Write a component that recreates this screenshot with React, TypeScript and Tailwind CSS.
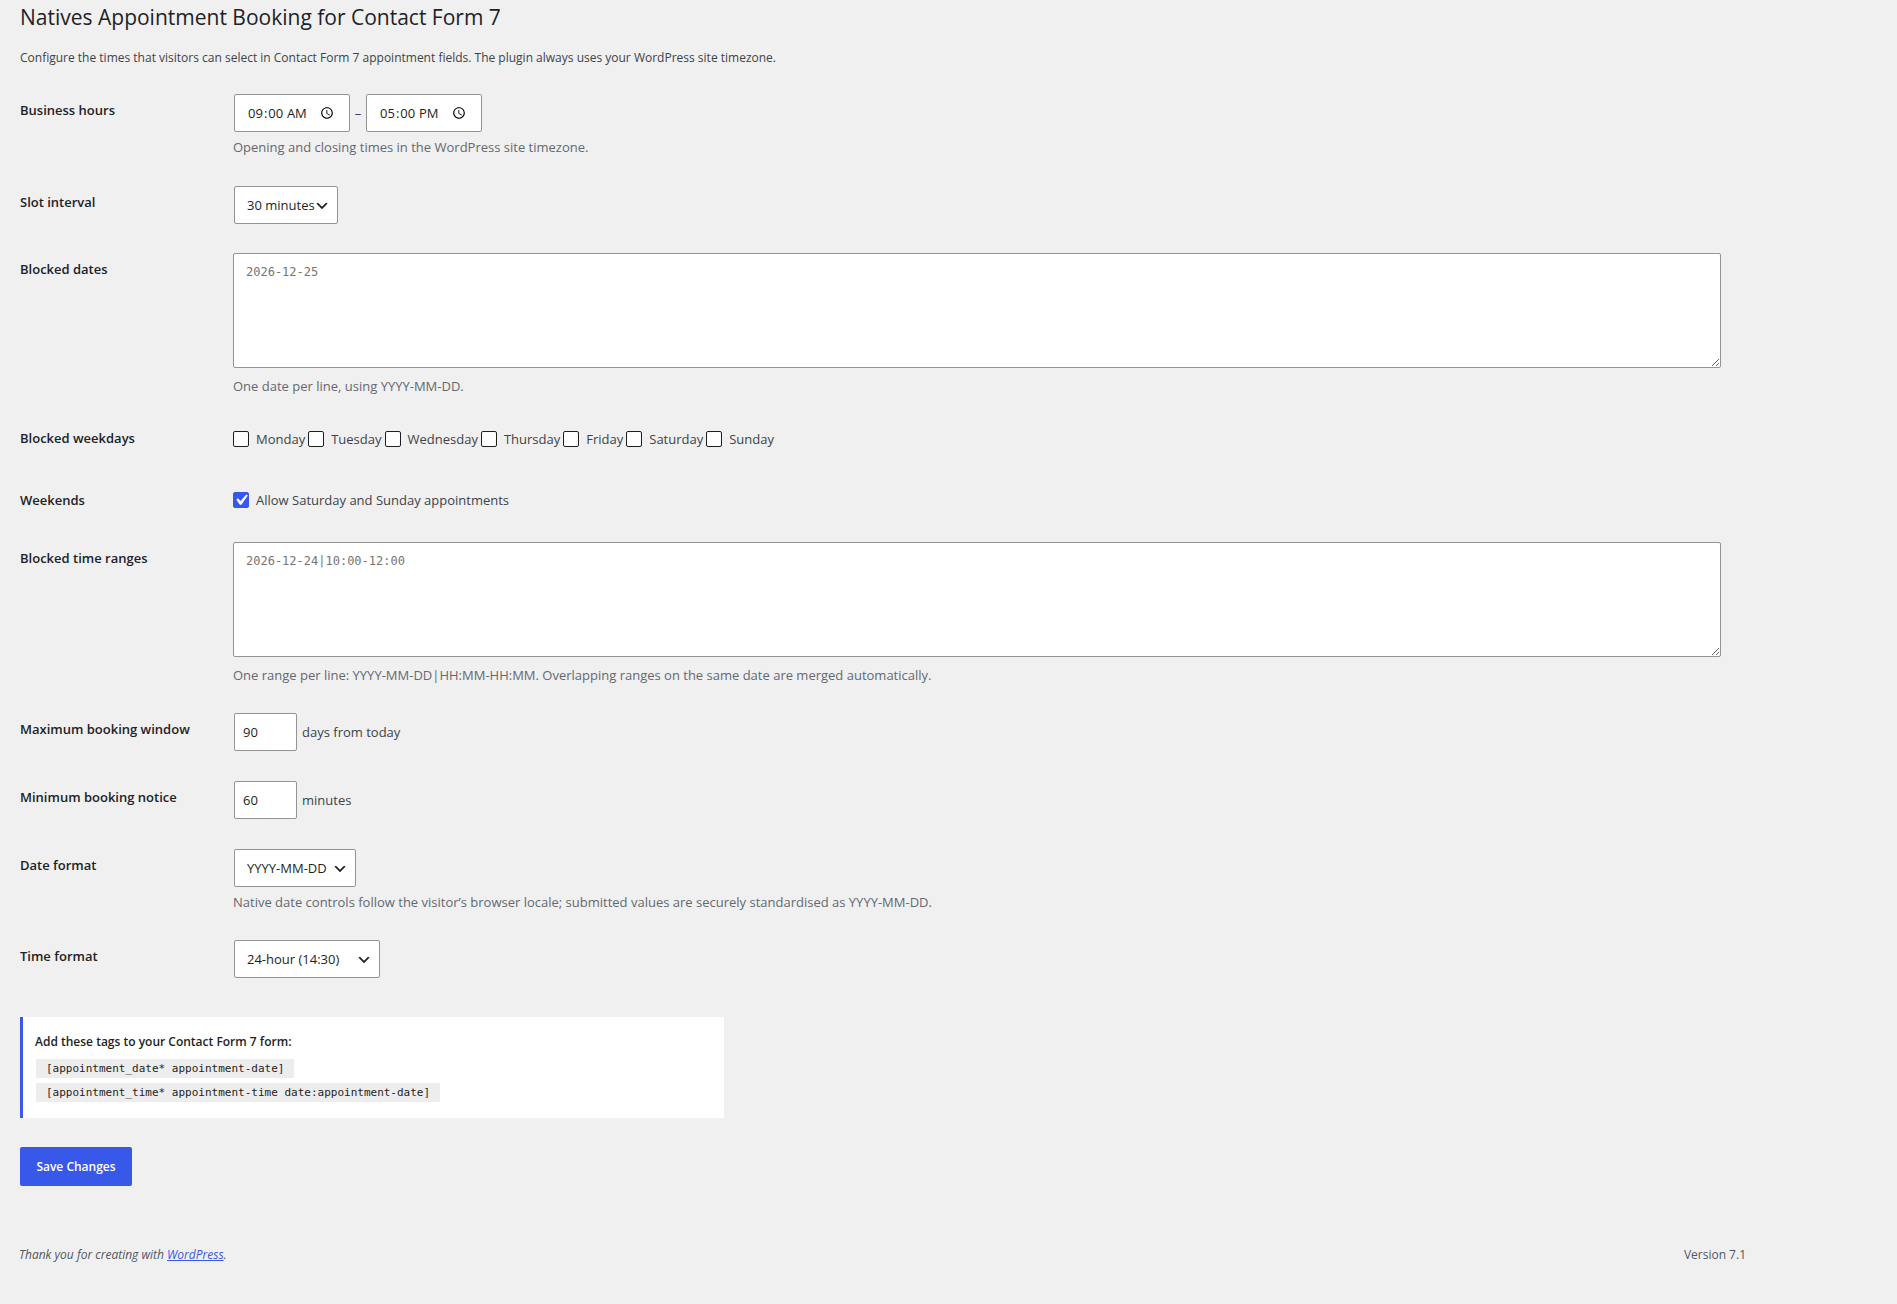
import React, { useState } from "react";

const WEEKDAYS = ["Monday", "Tuesday", "Wednesday", "Thursday", "Friday", "Saturday", "Sunday"];

const fieldBox = "border border-[#949494] rounded-xs bg-white text-[#1e1e1e]";

function Row({ label, htmlFor, height, children }: { label: string; htmlFor?: string; height: string; children: React.ReactNode }) {
  return (
    <tr className={height}>
      <th scope="row" className="w-[203px] pt-[21px] pr-2.5 text-left align-top text-[13px] leading-5 font-semibold text-[#1d2327]">
        {htmlFor ? <label htmlFor={htmlFor}>{label}</label> : label}
      </th>
      <td className="px-2.5 pt-[15px] align-top text-[13px] leading-5">{children}</td>
    </tr>
  );
}

function Description({ children }: { children: React.ReactNode }) {
  return <p className="mt-[5px] text-[13px] leading-5 text-[#646970]">{children}</p>;
}

function Select({ id, width, options }: { id: string; width: string; options: string[] }) {
  return (
    <div className={`relative ml-px ${width}`}>
      <select id={id} className={`h-[38px] w-full appearance-none pl-3 text-[13px] ${fieldBox}`}>
        {options.map((o) => (
          <option key={o}>{o}</option>
        ))}
      </select>
      <svg viewBox="0 0 20 20" className="pointer-events-none absolute top-3 right-2 size-4" aria-hidden="true">
        <path d="M5 6l5 5 5-5 2 1-7 7-7-7 2-1z" fill="#1e1e1e" />
      </svg>
    </div>
  );
}

function Check({ label, initial = false }: { label: string; initial?: boolean }) {
  const [on, setOn] = useState(initial);
  return (
    <label className="flex items-center gap-[7px]">
      <span className="relative size-4">
        <input
          type="checkbox"
          checked={on}
          onChange={(e) => setOn(e.target.checked)}
          className="block size-4 appearance-none rounded-xs border border-[#1e1e1e] bg-white checked:border-[#3858e9] checked:bg-[#3858e9]"
        />
        {on && (
          <svg viewBox="0 0 20 20" className="pointer-events-none absolute -top-[3px] -left-[3px] size-[22px]" aria-hidden="true">
            <path d="M14.83 4.89l1.34.94-5.81 8.38H9.02L5.78 9.67l1.34-1.25 2.57 2.4z" fill="#fff" />
          </svg>
        )}
      </span>
      {label}
    </label>
  );
}

export default function App() {
  const time = `h-[38px] w-[116px] pl-3 pr-3 text-[13px] ${fieldBox}`;
  const area = `block h-[115px] w-full resize px-3 py-2 font-['DejaVu_Sans_Mono',monospace] text-[12px] leading-5 placeholder:text-[#757575] ${fieldBox}`;
  const num = `h-[38px] w-[63px] pl-2 text-[13px] ${fieldBox}`;
  const code = "bg-[#ededed] py-[3px] px-2.5 font-['DejaVu_Sans_Mono',monospace] text-[11px] leading-[13px]";
  return (
    <div className="min-h-screen bg-[#f0f0f0] pr-[151px] pl-5 font-['Open_Sans',sans-serif] text-[13px] text-[#3c434a]">
      <form className="pr-[15px]" onSubmit={(e) => e.preventDefault()}>
        <h1 className="pt-0.5 text-[21px] leading-[30px] text-[#1d2327]">Natives Appointment Booking for Contact Form 7</h1>
        <p className="mt-4 text-[12px] leading-5">
          Configure the times that visitors can select in Contact Form 7 appointment fields. The plugin always uses your WordPress site timezone.
        </p>

        <table className="mt-[11px] w-full table-fixed border-collapse">
          <tbody>
            <Row label="Business hours" height="h-[92px]">
              <div className="ml-px flex items-center">
                <input type="time" aria-label="Opening time" defaultValue="09:00" className={time} />
                <span className="w-4 text-center">–</span>
                <input type="time" aria-label="Closing time" defaultValue="17:00" className={time} />
              </div>
              <Description>Opening and closing times in the WordPress site timezone.</Description>
            </Row>
            <Row label="Slot interval" htmlFor="interval" height="h-[67px]">
              <Select id="interval" width="w-[104px]" options={["30 minutes"]} />
            </Row>
            <Row label="Blocked dates" htmlFor="dates" height="h-[169px]">
              <textarea id="dates" placeholder="2026-12-25" className={area} />
              <div className="pt-[3px]">
                <Description>One date per line, using YYYY-MM-DD.</Description>
              </div>
            </Row>
            <Row label="Blocked weekdays" height="h-[62px]">
              <div className="flex gap-[3px] pt-[7px]">
                {WEEKDAYS.map((d) => (
                  <Check key={d} label={d} />
                ))}
              </div>
            </Row>
            <Row label="Weekends" height="h-[58px]">
              <div className="flex pt-1.5">
                <Check label="Allow Saturday and Sunday appointments" initial />
              </div>
            </Row>
            <Row label="Blocked time ranges" htmlFor="ranges" height="h-[171px]">
              <textarea id="ranges" placeholder="2026-12-24|10:00-12:00" className={area} />
              <div className="pt-[3px]">
                <Description>
                  One range per line: YYYY-MM-DD|HH:MM-HH:MM. Overlapping ranges on the same date are merged automatically.
                </Description>
              </div>
            </Row>
            <Row label="Maximum booking window" htmlFor="max" height="h-[68px]">
              <div className="ml-px flex items-center gap-[5px]">
                <input id="max" type="number" defaultValue={90} className={num} />
                days from today
              </div>
            </Row>
            <Row label="Minimum booking notice" htmlFor="min" height="h-[68px]">
              <div className="ml-px flex items-center gap-[5px]">
                <input id="min" type="number" defaultValue={60} className={num} />
                minutes
              </div>
            </Row>
            <Row label="Date format" htmlFor="datefmt" height="h-[91px]">
              <Select id="datefmt" width="w-[122px]" options={["YYYY-MM-DD"]} />
              <Description>
                Native date controls follow the visitor’s browser locale; submitted values are securely standardised as YYYY-MM-DD.
              </Description>
            </Row>
            <Row label="Time format" htmlFor="timefmt" height="h-[69px]">
              <Select id="timefmt" width="w-[146px]" options={["24-hour (14:30)", "12-hour (2:30 PM)"]} />
            </Row>
          </tbody>
        </table>

        <div className="mt-[23px] w-full max-w-[704px] border-l-3 border-[#3858e9] bg-white pt-[15px] pr-3 pb-4 pl-3 text-[#1e1e1e]">
          <p className="text-[12px] leading-5 font-semibold">Add these tags to your Contact Form 7 form:</p>
          <div className="mt-[7px] ml-px flex flex-col items-start gap-[5px]">
            <code className={code}>[appointment_date* appointment-date]</code>
            <code className={code}>[appointment_time* appointment-time date:appointment-date]</code>
          </div>
        </div>

        <button type="submit" className="mt-[29px] h-[39px] w-28 rounded-xs bg-[#3858e9] text-[12px] font-semibold text-white">
          Save Changes
        </button>
      </form>

      <footer className="-ml-px mt-[59px] flex justify-between leading-5 text-[#50575e]">
        <p className="text-[12px] italic">
          Thank you for creating with{" "}
          <a href="#" className="text-[#3858e9] underline">
            WordPress
          </a>
          .
        </p>
        <p className="text-[12px]">Version 7.1</p>
      </footer>
    </div>
  );
}
